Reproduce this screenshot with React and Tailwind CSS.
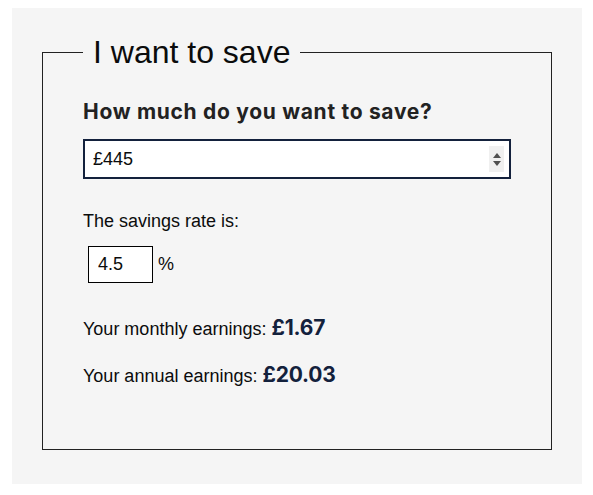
import { useState } from "react";

export default function App() {
  const [amount, setAmount] = useState("£445");
  const [rate, setRate] = useState("4.5");

  const value = parseFloat(amount.replace(/[^0-9.]/g, "")) || 0;
  const pence = Math.round(value * (parseFloat(rate) || 0));
  const annual = (pence / 100).toFixed(2);
  const monthly = (Math.round(pence / 12) / 100).toFixed(2);

  return (
    <div className="bg-white pt-2 pl-3 w-[593px] h-[495px]" style={{ fontFamily: '"Liberation Sans", Arial, sans-serif' }}>
      <div className="bg-[#f5f5f5] w-[570px] h-[476px] pt-[26px] pl-[30px]">
        <fieldset className="w-[510px] h-[416px] border border-[#222] pl-10 pr-10 m-0">
          <legend className="px-[10px] text-[32px] leading-9 text-[#0b0c0c]">I want to save</legend>

          <label
            htmlFor="amount"
            className="block mt-[26px] text-[21px] leading-[31px] font-bold tracking-[0.7px] text-[#222]"
            style={{ fontFamily: "Inter, sans-serif" }}
          >
            How much do you want to save?
          </label>
          <div className="mt-[12px] w-[428px] h-10 flex items-center border-2 border-[#13213c] bg-white">
            <input
              id="amount"
              type="text"
              autoFocus
              value={amount}
              onChange={(e) => setAmount(e.target.value)}
              className="flex-1 min-w-0 h-full px-2 text-[18px] text-[#0b0c0c] caret-black outline-none bg-transparent"
            />
            <div className="mr-[5px] w-[15px] h-[26px] bg-[#f0f0f0] flex flex-col items-center justify-center gap-[3px]">
              <svg width="8" height="5" viewBox="0 0 8 5">
                <path d="M0 5 L4 0 L8 5 Z" fill="#505050" />
              </svg>
              <svg width="8" height="5" viewBox="0 0 8 5">
                <path d="M0 0 L8 0 L4 5 Z" fill="#505050" />
              </svg>
            </div>
          </div>

          <p className="mt-[29px] text-[18px] leading-[27px] text-[#0b0c0c]">The savings rate is:</p>
          <div className="mt-[11px] ml-[5px] flex items-center gap-[5px]">
            <input
              type="text"
              value={rate}
              onChange={(e) => setRate(e.target.value)}
              className="w-[65px] h-[37px] border border-black bg-white px-[9px] text-[18px] text-[#0b0c0c] outline-none"
            />
            <span className="text-[18px] text-[#0b0c0c]">%</span>
          </div>

          <p className="mt-[33px] text-[18px] leading-[27px] text-[#0b0c0c]">
            Your monthly earnings:{" "}
            <span className="text-[21px] leading-none font-bold tracking-[-0.2px] text-[#13213c]" style={{ fontFamily: "Inter, sans-serif" }}>
              £{monthly}
            </span>
          </p>
          <p className="mt-[20px] text-[18px] leading-[27px] text-[#0b0c0c]">
            Your annual earnings:{" "}
            <span className="text-[21px] leading-none font-bold tracking-[-0.2px] text-[#13213c]" style={{ fontFamily: "Inter, sans-serif" }}>
              £{annual}
            </span>
          </p>
        </fieldset>
      </div>
    </div>
  );
}
